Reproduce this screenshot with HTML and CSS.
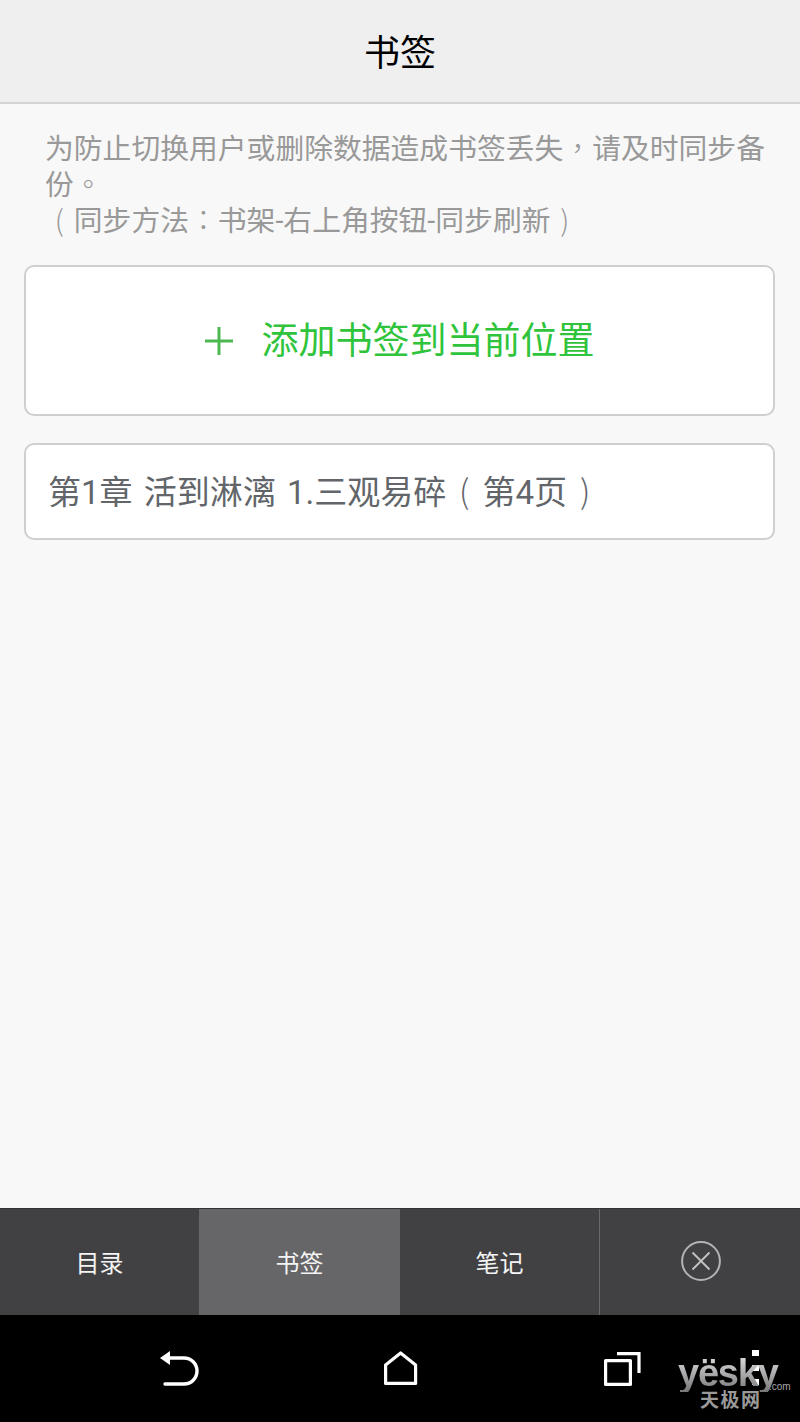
FILE: index.html
```html
<!DOCTYPE html>
<html lang="zh">
<head>
    <meta charset="UTF-8">
    <title>书签</title>
    <link rel="stylesheet" href="styles.css">
</head>
<body>
    <div class="screen">
        <div class="header">书签</div>

        <div class="content">
            <div class="tip">
                <div>为防止切换用户或删除数据造成书签丢失<span class="pn">，</span>请及时同步备</div>
                <div>份<span class="pn">。</span></div>
                <div><span class="pn">(</span>同步方法<span class="pn">：</span>书架-右上角按钮-同步刷新<span class="pn">)</span></div>
            </div>

            <div class="card add-card">
                <svg class="plus" width="28" height="28" viewBox="0 0 28 28">
                    <path d="M0 14 H28 M14 0 V28" stroke="#4cb84f" stroke-width="3"/>
                </svg>
                <span>添加书签到当前位置</span>
            </div>

            <div class="card mark-card"><span>第1章 活到淋漓 1.三观易碎<span class="pn">(</span>第4页<span class="pn">)</span></span></div>
        </div>

        <div class="tabs">
            <div class="tab">目录</div>
            <div class="tab active">书签</div>
            <div class="tab">笔记</div>
            <div class="tab close">
                <svg width="40" height="40" viewBox="0 0 40 40">
                    <circle cx="20" cy="20" r="18.9" fill="none" stroke="#b4b4b4" stroke-width="2"/>
                    <path d="M11.5 11.5 L28.5 28.5 M28.5 11.5 L11.5 28.5" stroke="#c4c4c4" stroke-width="1.8"/>
                </svg>
            </div>
        </div>

        <div class="navbar">
            <svg class="nav-icon back" width="42" height="36" viewBox="0 0 42 36">
                <path d="M11 7 H25 A13 13 0 0 1 25 33 H6" fill="none" stroke="#fff" stroke-width="3.4" stroke-linecap="round"/>
                <path d="M1 7 L11 0 V14 Z" fill="#fff"/>
            </svg>
            <svg class="nav-icon home" width="36" height="36" viewBox="0 0 36 36">
                <path d="M2.6 32.4 V14 L17.6 2 L32.6 14 V32.4 Z" fill="none" stroke="#fff" stroke-width="3.2" stroke-linejoin="round"/>
            </svg>
            <svg class="nav-icon recent" width="38" height="36" viewBox="0 0 38 36">
                <rect x="1.6" y="9.6" width="24.8" height="23.8" fill="none" stroke="#fff" stroke-width="3.2" stroke-linejoin="round"/>
                <path d="M13 2.6 H35 V22" fill="none" stroke="#fff" stroke-width="3.2"/>
            </svg>
            <div class="menu-dots">
                <i></i><i></i><i></i>
            </div>
            <div class="watermark">
                <div class="wm-logo">yësky</div>
                <div class="wm-com">.com</div>
                <div class="wm-cn">天极网</div>
            </div>
        </div>
    </div>
</body>
</html>
```

FILE: styles.css
```css
* {
    box-sizing: border-box;
}

body {
    margin: 0;
    font-family: "Roboto", "Noto Sans CJK SC", sans-serif;
    background-color: #f8f8f8;
}

.screen {
    width: 800px;
    height: 1422px;
    display: flex;
    flex-direction: column;
}

.header {
    height: 104px;
    padding-bottom: 3px;
    background-color: #efefef;
    border-bottom: 2px solid #d4d4d4;
    display: flex;
    align-items: center;
    justify-content: center;
    font-size: 36px;
    color: #000;
}

.content {
    flex: 1;
    padding: 27px 25px 0 24px;
}

.tip {
    margin: 0 0 26px;
    padding: 0 0 0 21px;
    font-size: 28.8px;
    line-height: 36px;
    color: #999;
}

/* punctuation sits centered in its cell on this device */
.pn {
    display: inline-block;
    width: 1em;
    line-height: 1;
    text-align: center;
    font-family: "Noto Sans CJK TC", sans-serif;
    font-weight: 300;
}

.card {
    background-color: #fff;
    border: 2px solid #cfcfcf;
    border-radius: 10px;
    display: flex;
    align-items: center;
}

.add-card {
    height: 151px;
    justify-content: center;
    gap: 29px;
    padding-bottom: 5px;
    font-size: 37px;
    color: #2fc43c;
    margin-bottom: 27px;
}

.plus {
    margin-top: 6px;
}

.mark-card {
    height: 97px;
    padding: 0 0 4px 22px;
    font-size: 33px;
    word-spacing: 3px;
    color: #62666a;
}

.mark-card .pn {
    width: 1.1em;
}

.tabs {
    height: 107px;
    display: grid;
    grid-template-columns: 199px 201px 199px 201px;
    background-color: #414042;
    border-top: 1px solid #333;
}

.tab {
    display: flex;
    align-items: center;
    justify-content: center;
    padding-bottom: 2px;
    font-size: 24px;
    color: #f4f4f4;
}

.tab.active {
    background-color: #666567;
}

.tab.close {
    border-left: 1px solid #6a6a6a;
    padding-left: 2px;
}

.navbar {
    height: 107px;
    background-color: #000;
    position: relative;
}

.nav-icon {
    position: absolute;
}

.back {
    left: 159px;
    top: 36px;
}

.home {
    left: 383px;
    top: 36px;
}

.recent {
    left: 604px;
    top: 36px;
}

.menu-dots i {
    position: absolute;
    left: 752px;
    width: 7px;
    height: 6px;
    background-color: #fff;
}

.menu-dots i:nth-child(1) {
    top: 35px;
}

.menu-dots i:nth-child(2) {
    top: 50px;
}

.menu-dots i:nth-child(3) {
    top: 64px;
}

.watermark {
    position: absolute;
    left: 678px;
    top: 39px;
    width: 112px;
    height: 56px;
}

.wm-logo {
    font-family: "Liberation Sans", sans-serif;
    font-size: 38px;
    font-weight: bold;
    letter-spacing: -1.2px;
    line-height: 38px;
    white-space: nowrap;
    background: linear-gradient(#e2e2e4, #77777a);
    -webkit-background-clip: text;
    background-clip: text;
    color: transparent;
}

.wm-com {
    position: absolute;
    left: 91px;
    top: 27px;
    font-family: "Liberation Sans", sans-serif;
    font-size: 10px;
    line-height: 12px;
    color: #a8a8aa;
}

.wm-cn {
    padding-left: 22px;
    font-size: 19px;
    line-height: 18px;
    letter-spacing: 1.5px;
    font-weight: bold;
    color: #9a9a9b;
}
```
